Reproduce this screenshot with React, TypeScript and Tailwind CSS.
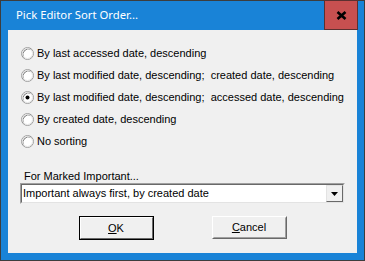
import { useState } from 'react'

const options = [
  'By last accessed date, descending',
  'By last modified date, descending;  created date, descending',
  'By last modified date, descending;  accessed date, descending',
  'By created date, descending',
  'No sorting',
]

function Radio({ checked }: { checked: boolean }) {
  return (
    <svg width="13" height="13" viewBox="0 0 13 13" className="shrink-0">
      <circle cx="6.5" cy="6.5" r="6" fill="#ffffff" stroke="#a0a0a0" />
      <path d="M2.3 10.2 A6 6 0 0 1 10.2 2.3" fill="none" stroke="#696969" />
      <circle cx="6.5" cy="6.5" r="5" fill="none" stroke="#e3e3e3" />
      {checked && <circle cx="6.5" cy="6.5" r="2" fill="#000000" />}
    </svg>
  )
}

export default function App() {
  const [selected, setSelected] = useState(2)

  return (
    <div className="w-[365px] h-[261px] bg-[#1983d7] border border-[#3d3d3d] flex flex-col font-['Liberation_Sans',Arial,sans-serif] text-[11px] text-black">
      <div className="h-[29px] flex items-start justify-between pl-[15px]">
        <span className="mt-[6px] text-white text-[11.3px] font-['Noto_Sans',sans-serif]">Pick Editor Sort Order...</span>
        <div className="w-[34px] h-[30px] -mt-px mr-[6px] bg-[#c75050] border border-[#5b3030] flex items-center justify-center">
          <svg width="11" height="9" viewBox="0 0 11 9">
            <path d="M1.5 1 L9.5 8 M9.5 1 L1.5 8" stroke="#000" strokeWidth="2.6" />
          </svg>
        </div>
      </div>
      <div className="flex-1 mx-[7px] mb-[7px] bg-[#f0f0f0] flex flex-col">
        <div className="flex flex-col gap-[9px] pl-[13px] pt-[17px]">
          {options.map((o, i) => (
            <label key={o} className="flex items-center gap-[3px] h-[13px]" onClick={() => setSelected(i)}>
              <Radio checked={selected === i} />
              <span className="leading-[13px] whitespace-pre">{o}</span>
            </label>
          ))}
        </div>
        <div className="pl-[16px] mt-[22px] leading-[13px]">For Marked Important...</div>
        <div className="mx-[12px] mt-0 h-[21px] bg-white border border-t-[#a0a0a0] border-l-[#a0a0a0] border-r-[#f0f0f0] border-b-[#f0f0f0] flex">
          <div className="flex-1 border border-t-[#696969] border-l-[#696969] border-r-[#e3e3e3] border-b-[#e3e3e3] flex items-center pl-px">
            <span>Important always first, by created date</span>
            <div className="ml-auto w-[17px] h-[17px] bg-[#f0f0f0] border border-t-[#e3e3e3] border-l-[#e3e3e3] border-r-[#696969] border-b-[#696969] flex items-center justify-center">
              <svg width="7" height="4" viewBox="0 0 7 4">
                <path d="M0 0 H7 L3.5 4 Z" fill="#000" />
              </svg>
            </div>
          </div>
        </div>
        <div className="flex justify-center gap-[58px] mt-[12px]">
          <button className="w-[75px] h-[24px] bg-[#f0f0f0] border border-black flex">
            <span className="flex-1 border border-t-white border-l-white border-r-[#696969] border-b-[#696969] flex items-center justify-center">
              <span><span className="underline">O</span>K</span>
            </span>
          </button>
          <button className="w-[75px] h-[23px] bg-[#f0f0f0] border border-t-white border-l-white border-r-[#696969] border-b-[#696969] flex">
            <span className="flex-1 border border-t-[#f0f0f0] border-l-[#f0f0f0] border-r-[#a0a0a0] border-b-[#a0a0a0] flex items-center justify-center">
              <span><span className="underline">C</span>ancel</span>
            </span>
          </button>
        </div>
      </div>
    </div>
  )
}
